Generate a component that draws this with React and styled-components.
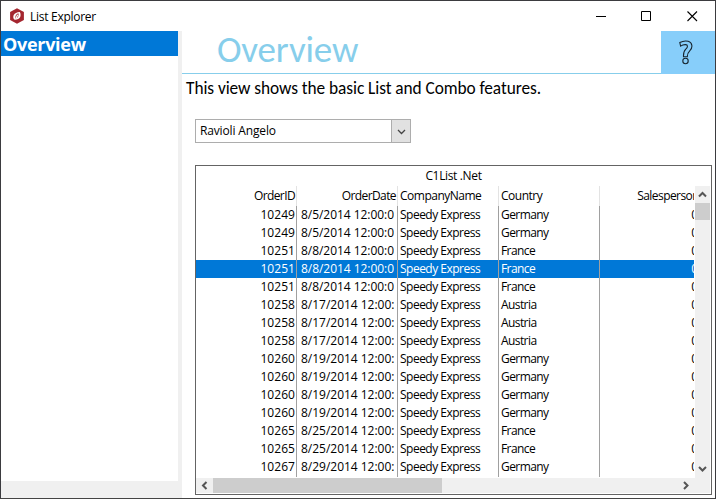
import React from "react";
import styled, { createGlobalStyle } from "styled-components";

const Global = createGlobalStyle`
  * { box-sizing: border-box; }
  body { margin: 0; overflow: hidden; background: #fff; }
`;

const Window = styled.div`
  width: 716px;
  height: 499px;
  display: flex;
  flex-direction: column;
  border: 1px solid #3b3b3f;
  border-bottom-color: #444;
  background: #fff;
  color: #000;
  font: 12px/18px "Open Sans", "Noto Sans", sans-serif;
  letter-spacing: -0.35px;
  white-space: nowrap;
  overflow: hidden;
`;

const TitleBar = styled.header`
  height: 30px;
  flex: none;
  display: flex;
  align-items: center;
  padding: 0 0 0 8px;
`;

const Title = styled.div`
  flex: 1;
  margin-left: 5px;
  padding-top: 1px;
  letter-spacing: -0.28px;
`;

const WindowButton = styled.div`
  width: 45.5px;
  height: 30px;
  display: flex;
  align-items: center;
  justify-content: center;
`;

const Body = styled.div`
  flex: 1;
  min-height: 0;
  display: flex;
`;

const Sidebar = styled.nav`
  width: 181px;
  flex: none;
  background: #f0f0f0;
  padding: 0 4px 17px 0;
`;

const NavList = styled.div`
  height: 100%;
  background: #fff;
`;

const NavItem = styled.div`
  height: 25px;
  padding-left: 2px;
  background: #0078d7;
  color: #fff;
  font-size: 18px;
  font-weight: 700;
  line-height: 26px;
  letter-spacing: -0.3px;
`;

const Main = styled.main`
  flex: 1;
  min-width: 0;
  display: flex;
  flex-direction: column;
`;

const Heading = styled.div`
  height: 43px;
  flex: none;
  display: flex;
  justify-content: space-between;
  border-bottom: 1px solid #87ceeb;
`;

const HeadingText = styled.h1`
  margin: 0;
  padding-left: 35px;
  color: #87ceeb;
  font: 400 37px/37px Carlito, Lato, sans-serif;
  letter-spacing: -0.15px;
`;

const HelpButton = styled.div`
  width: 54px;
  height: 43px;
  background: #87cefa;
  display: flex;
  align-items: center;
  justify-content: center;
  padding-right: 5px;
`;

const Description = styled.p`
  margin: 0;
  padding: 2px 0 0 4px;
  height: 45px;
  flex: none;
  font: 17.33px/24px Carlito, Lato, sans-serif;
  letter-spacing: -0.06px;
`;

const Combo = styled.div`
  width: 216px;
  height: 24px;
  flex: none;
  margin-left: 13px;
  display: flex;
  border: 1px solid #adadad;
`;

const ComboValue = styled.div`
  flex: 1;
  padding-left: 4px;
  line-height: 21px;
  letter-spacing: -0.15px;
`;

const ComboButton = styled.div`
  width: 19px;
  border-left: 1px solid #adadad;
  background: #e1e1e1;
  display: flex;
  align-items: center;
  justify-content: center;
`;

const ListBox = styled.section`
  width: 517px;
  height: 330px;
  flex: none;
  margin: 22px 0 0 13px;
  border: 1px solid #646464;
  display: flex;
  flex-direction: column;
`;

const Caption = styled.div`
  height: 20px;
  flex: none;
  text-align: center;
  line-height: 20px;
`;

const Viewport = styled.div`
  height: 292px;
  flex: none;
  display: flex;
`;

const Rows = styled.div`
  width: 498px;
  overflow: hidden;
`;

const Row = styled.div`
  display: grid;
  grid-template-columns: 101px 101px 101px 101px 101px;
  height: ${(p) => (p.$header ? 20 : 18)}px;
  line-height: ${(p) => (p.$header ? 20 : 18)}px;
  background: ${(p) => (p.$selected ? "#0078d7" : "#fff")};
  color: ${(p) => (p.$selected ? "#fff" : "#000")};
  --rule: ${(p) => (p.$header ? "#e3e3e3" : "#a0a0a0")};
`;

const Cell = styled.div`
  padding: 0 ${(p) => p.$inset || 1}px 0 2px;
  border-right: 1px solid var(--rule);
  overflow: hidden;
  text-align: ${(p) => (p.$right ? "right" : "left")};
  letter-spacing: ${(p) => p.$spacing || "-0.48px"};
`;

const DateText = styled.div`
  margin: 0 2px;
  overflow: hidden;
  text-align: left;
`;

const RuleTail = styled(Row)`
  height: 1px;
`;

const VScroll = styled.div`
  width: 15px;
  margin-left: 1px;
  background: #f0f0f0;
  display: flex;
  flex-direction: column;
`;

const HScroll = styled.div`
  width: 514px;
  height: 15px;
  background: #f0f0f0;
  display: flex;
`;

const Arrow = styled.div`
  width: ${(p) => p.$w}px;
  height: ${(p) => p.$h}px;
  display: flex;
  align-items: center;
  justify-content: center;
`;

const Thumb = styled.div`
  width: ${(p) => p.$w}px;
  height: ${(p) => p.$h}px;
  background: #cdcdcd;
`;

const Spacer = styled.div`
  flex: 1;
`;

const chevrons = {
  up: "M1 6.5 L4.5 3 L8 6.5",
  down: "M1 3 L4.5 6.5 L8 3",
  left: "M6.5 1 L3 4.5 L6.5 8",
  right: "M3 1 L6.5 4.5 L3 8",
};

function Chevron({ dir, width = 2, color = "#555" }) {
  return (
    <svg width="9" height="9" viewBox="0 0 9 9">
      <path d={chevrons[dir]} fill="none" stroke={color} strokeWidth={width} />
    </svg>
  );
}

const orders = [
  ["10249", "8/5/2014 12:00:0", "Germany"],
  ["10249", "8/5/2014 12:00:0", "Germany"],
  ["10251", "8/8/2014 12:00:0", "France"],
  ["10251", "8/8/2014 12:00:0", "France"],
  ["10251", "8/8/2014 12:00:0", "France"],
  ["10258", "8/17/2014 12:00:", "Austria"],
  ["10258", "8/17/2014 12:00:", "Austria"],
  ["10258", "8/17/2014 12:00:", "Austria"],
  ["10260", "8/19/2014 12:00:", "Germany"],
  ["10260", "8/19/2014 12:00:", "Germany"],
  ["10260", "8/19/2014 12:00:", "Germany"],
  ["10260", "8/19/2014 12:00:", "Germany"],
  ["10265", "8/25/2014 12:00:", "France"],
  ["10265", "8/25/2014 12:00:", "France"],
  ["10267", "8/29/2014 12:00:", "Germany"],
];

export default function App() {
  return (
    <Window>
      <Global />
      <TitleBar>
        <svg width="16" height="16" viewBox="0 0 16 16">
          <path d="M8 .3 L14.9 4 V12 L8 15.7 L1.1 12 V4 Z" fill="#a4262f" />
          <path d="M5.2 11.6 C3 8.5 4.6 4.2 10.8 3.9 C12.8 7.6 11 12 5.2 11.6 Z" fill="#fff" />
          <path d="M6.6 10.6 C5.9 7.9 7 6.2 9.4 5.3 C10.1 8 9 9.9 6.6 10.6 Z" fill="#a4262f" />
          <path d="M7.2 10 L8.7 6.8" stroke="#fff" strokeWidth="1.2" />
        </svg>
        <Title>List Explorer</Title>
        <WindowButton>
          <svg width="11" height="11" viewBox="0 0 11 11"><path d="M0 5.5 H10" stroke="#000" /></svg>
        </WindowButton>
        <WindowButton>
          <svg width="11" height="11" viewBox="0 0 11 11"><path d="M.5 .5 H9.5 V9.5 H.5 Z" fill="none" stroke="#000" /></svg>
        </WindowButton>
        <WindowButton>
          <svg width="11" height="11" viewBox="0 0 11 11"><path d="M.5 .5 L10 10 M10 .5 L.5 10" stroke="#000" strokeWidth="1.1" /></svg>
        </WindowButton>
      </TitleBar>
      <Body>
        <Sidebar>
          <NavList>
            <NavItem>Overview</NavItem>
          </NavList>
        </Sidebar>
        <Main>
          <Heading>
            <HeadingText>Overview</HeadingText>
            <HelpButton>
              <svg width="16" height="25" viewBox="0 0 16 25" fill="none" stroke="#17252e" strokeWidth="1.1">
                <path d="M1.8 2.6 C5 .8 8 .7 10.2 1.3 C14.8 2.6 14.8 8 11.9 10.6 C10 12.4 9.3 13.2 9.3 16.8 H5.5 C5.3 12.7 5.8 11 7.8 9.2 C9.9 7.4 10.2 4.7 7.5 4.6 C5.5 4.5 4.1 5.1 2.6 6.1 Z" />
                <circle cx="7.5" cy="21" r="2.7" />
              </svg>
            </HelpButton>
          </Heading>
          <Description>This view shows the basic List and Combo features.</Description>
          <Combo>
            <ComboValue>Ravioli Angelo</ComboValue>
            <ComboButton><Chevron dir="down" width={1.3} color="#444" /></ComboButton>
          </Combo>
          <ListBox>
            <Caption>C1List .Net</Caption>
            <Viewport>
              <Rows>
                <Row $header>
                  <Cell $right $spacing="-0.6px">OrderID</Cell>
                  <Cell $right $spacing="-0.6px">OrderDate</Cell>
                  <Cell $spacing="-0.5px">CompanyName</Cell>
                  <Cell>Country</Cell>
                  <Cell $right $spacing="-0.57px">Salesperson</Cell>
                </Row>
                {orders.map(([id, date, country], i) => (
                  <Row key={i} $selected={i === 3}>
                    <Cell $right $spacing="0.05px">{id}</Cell>
                    <Cell $spacing={date.endsWith("0") ? "-0.04px" : "-0.02px"}>
                      <DateText>{date}</DateText>
                    </Cell>
                    <Cell $spacing="-0.51px">Speedy Express</Cell>
                    <Cell $spacing="-0.58px">{country}</Cell>
                    <Cell $right $spacing="0" $inset={2}>0</Cell>
                  </Row>
                ))}
                <RuleTail><Cell /><Cell /><Cell /><Cell /></RuleTail>
              </Rows>
              <VScroll>
                <Arrow $w={15} $h={17}><Chevron dir="up" /></Arrow>
                <Thumb $w={15} $h={17} />
                <Spacer />
                <Arrow $w={15} $h={19}><Chevron dir="down" /></Arrow>
              </VScroll>
            </Viewport>
            <HScroll>
              <Arrow $w={17} $h={15}><Chevron dir="left" /></Arrow>
              <Thumb $w={229} $h={15} />
              <Spacer />
              <Arrow $w={17} $h={15}><Chevron dir="right" /></Arrow>
              <Arrow $w={16} $h={15} />
            </HScroll>
          </ListBox>
        </Main>
      </Body>
    </Window>
  );
}
